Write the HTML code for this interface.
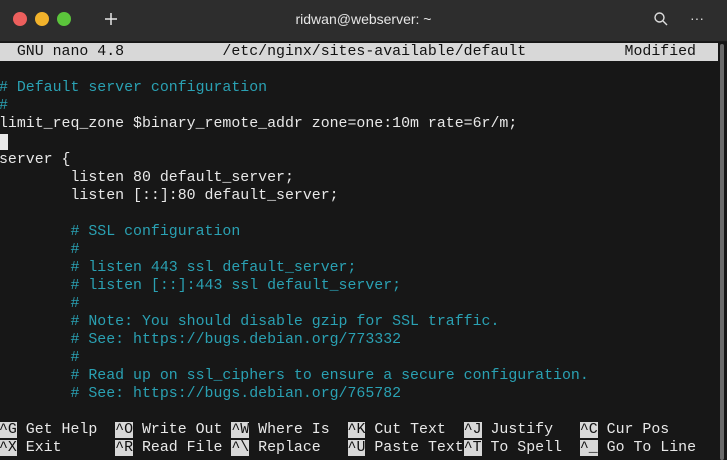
<!DOCTYPE html>
<html><head><meta charset="utf-8"><style>
*{margin:0;padding:0}
html,body{width:727px;height:460px;overflow:hidden;background:#171717}
#tb{position:absolute;left:0;top:0;width:727px;height:41px;background:#2d2d2d;border-bottom:1px solid #1a1a1a}
.dot{position:absolute;top:12px;width:14px;height:14px;border-radius:50%}
#title{position:absolute;top:0;left:0;width:727px;text-align:center;color:#e6e6e6;font:14px "Liberation Sans",sans-serif;line-height:38px}
#term{position:absolute;left:-1px;top:43px;font-family:"Liberation Mono",monospace;font-size:14.9px;line-height:18px;color:#e8e8e8}
.r{height:18px;white-space:pre}
.c{color:#2aa1b3}
.h{background:#d8d8d8;color:#111}
#sb{position:absolute;left:720px;top:44px;width:4px;height:416px;background:#6a6a6a;border-radius:2px}
</style></head><body>
<div id="tb">
<div class="dot" style="left:13px;background:#ec5f5d"></div>
<div class="dot" style="left:35px;background:#f1b22b"></div>
<div class="dot" style="left:57px;background:#5bc43b"></div>
<svg style="position:absolute;left:104px;top:12px" width="14" height="14"><path d="M7 1V13M1 7H13" stroke="#e6e6e6" stroke-width="1.5"/></svg>
<div id="title">ridwan@webserver: ~</div>
<svg style="position:absolute;left:653px;top:11px" width="16" height="16"><circle cx="6.5" cy="6.5" r="4.5" fill="none" stroke="#ddd" stroke-width="1.4"/><path d="M10 10L14 14" stroke="#ddd" stroke-width="1.4"/></svg>
<div style="position:absolute;left:690px;top:10px;color:#ddd;font:14px 'Liberation Sans',sans-serif;line-height:16px">···</div>
</div>
<div id="sb"></div>
<div id="term"><div class="r"><span class="h" style="display:inline-block;width:719px;height:18px;overflow:hidden">  GNU nano 4.8           /etc/nginx/sites-available/default           Modified</span></div><div class="r"> </div><div class="r c"># Default server configuration</div><div class="r c">#</div><div class="r">limit_req_zone $binary_remote_addr zone=one:10m rate=6r/m;</div><div class="r"><span style="background:#e8e8e8"> </span></div><div class="r">server {</div><div class="r">        listen 80 default_server;</div><div class="r">        listen [::]:80 default_server;</div><div class="r"> </div><div class="r c">        # SSL configuration</div><div class="r c">        #</div><div class="r c">        # listen 443 ssl default_server;</div><div class="r c">        # listen [::]:443 ssl default_server;</div><div class="r c">        #</div><div class="r c">        # Note: You should disable gzip for SSL traffic.</div><div class="r c">        # See: https://bugs.debian.org/773332</div><div class="r c">        #</div><div class="r c">        # Read up on ssl_ciphers to ensure a secure configuration.</div><div class="r c">        # See: https://bugs.debian.org/765782</div><div class="r"> </div><div class="r"><span class="h">^G</span> Get Help  <span class="h">^O</span> Write Out <span class="h">^W</span> Where Is  <span class="h">^K</span> Cut Text  <span class="h">^J</span> Justify   <span class="h">^C</span> Cur Pos</div><div class="r"><span class="h">^X</span> Exit      <span class="h">^R</span> Read File <span class="h">^\</span> Replace   <span class="h">^U</span> Paste Text<span class="h">^T</span> To Spell  <span class="h">^_</span> Go To Line</div></div>
</body></html>
